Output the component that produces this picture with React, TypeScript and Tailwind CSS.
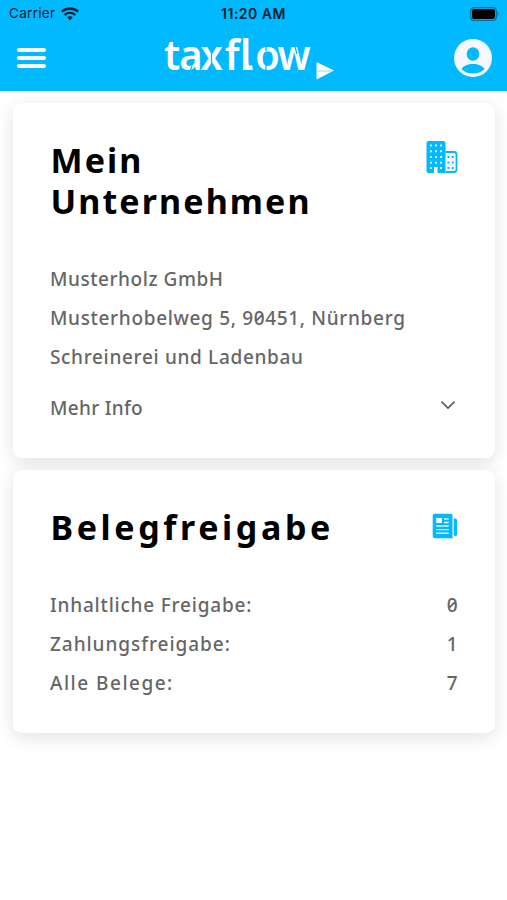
import type { ReactNode } from "react";
import clsx from "clsx";

const companyLines = [
  { text: "Musterholz GmbH", tracking: "tracking-[0.55px]" },
  { text: "Musterhobelweg 5, 90451, Nürnberg", tracking: "tracking-[0.67px]" },
  { text: "Schreinerei und Ladenbau", tracking: "tracking-[0.67px]" },
];

const approvals = [
  { label: "Inhaltliche Freigabe:", count: 0, tracking: "tracking-[0.8px]" },
  { label: "Zahlungsfreigabe:", count: 1, tracking: "tracking-[0.95px]" },
  { label: "Alle Belege:", count: 7, tracking: "tracking-[1.5px]" },
];

function WifiIcon() {
  return (
    <svg width="18" height="14" viewBox="0 0 18 14" fill="none" stroke="#02202e" strokeWidth="2.3">
      <path d="M0.8 4.7C5.4 0.4 12.6 0.4 17.2 4.7" />
      <path d="M3.7 7.9C6.8 5.2 11.2 5.2 14.3 7.9" />
      <path d="M6.2 10.3C7.9 9 10.1 9 11.8 10.3L9 13.3Z" fill="#02202e" stroke="none" />
    </svg>
  );
}

function BatteryIcon() {
  return (
    <svg width="30" height="14" viewBox="0 0 30 14">
      <rect x="0.7" y="0.7" width="25.6" height="12.6" rx="3.4" fill="none" stroke="#026f99" strokeWidth="1.2" />
      <rect x="2" y="2" width="23" height="10" rx="2" fill="#000" />
      <path d="M27.5 4.8c1.4.5 1.4 3.9 0 4.4z" fill="#026f99" />
    </svg>
  );
}

function Logo() {
  return (
    <svg width="172" height="62" viewBox="0 -10 172 62" className="block">
      <text
        x="0 16 38.5 64 80 96 119.5"
        y="35"
        transform="scale(0.95 1)"
        fill="#fff"
        fontSize="42"
        fontWeight="600"
        fontFamily="'Noto Sans', sans-serif"
      >
        taxflow
      </text>
      {/* foot of the l */}
      <path d="M82 27c0 5 1.500 6.500 6.500 5.500" fill="none" stroke="#fff" strokeWidth="4.400" />
      {/* stencil cuts */}
      <path d="M26 36l2-5M47.500 16v12M102 9v7M102 30v7M131 12l2 7" stroke="#00b9ff" strokeWidth="1.3" />
      {/* paper plane */}
      <path d="M152.500 27l17.500 8.600-17.500 9z" fill="#fff" />
      <path d="M153 36h15" stroke="#00b9ff" strokeWidth="0.5" />
    </svg>
  );
}

function AccountIcon() {
  return (
    <svg width="38" height="38" viewBox="0 0 38 38">
      <circle cx="19" cy="19" r="19" fill="#f5f8ff" />
      <ellipse cx="19" cy="15" rx="6.3" ry="6.7" fill="#00b9ff" />
      <path d="M7.5 30C9.6 26.6 14 25 19 25s9.4 1.6 11.5 5C27.6 33 23.6 34.6 19 34.6S10.4 33 7.5 30z" fill="#00b9ff" />
    </svg>
  );
}

function BuildingIcon() {
  const rows = [5.5, 11.2, 17, 22.7];
  return (
    <svg width="32" height="34" viewBox="0 0 32 34">
      <path d="M2 1h15.5a2 2 0 0 1 2 2v30h-8v-6H8v6H2.5A2 2 0 0 1 .5 31V3a2 2 0 0 1 1.5-2z" fill="#00b9ff" />
      <path d="M19.5 12H28a2.5 2.5 0 0 1 2.5 2.5v15A2.5 2.5 0 0 1 28 32h-8.5" fill="none" stroke="#00b9ff" strokeWidth="1.8" />
      {rows.map((y) => (
        <path key={y} d={`M4 ${y}h2M9 ${y}h2M14 ${y}h2`} stroke="#d9f5ff" strokeWidth="2" />
      ))}
      <path d="M4 28h2M14 28h2" stroke="#d9f5ff" strokeWidth="2" />
      <path d="M21.5 17h2M25.7 17h2M21.5 22.5h2M25.7 22.5h2M21.5 28h2M25.7 28h2" stroke="#00b9ff" strokeWidth="1.8" />
    </svg>
  );
}

function NewsIcon() {
  return (
    <svg width="26" height="26" viewBox="0 0 26 26">
      <path d="M2.5.7h16a2 2 0 0 1 2 2v20.5c0 .9.5 1.6 1.3 2H3.2A2.5 2.5 0 0 1 .7 22.7V2.5A1.8 1.8 0 0 1 2.5.7z" fill="#00b9ff" />
      <path d="M21.7 5.5h1.6A1.7 1.7 0 0 1 25 7.2v14.6a1.7 1.7 0 0 1-3.3 0z" fill="#00b9ff" />
      <path d="M4.3 5h5.5v5H4.3z" fill="#fff" />
      <path d="M12 6h4.7M12 9.5h4.7M4.3 13h12.4M4.3 16.6h12.4M4.3 20.3h12.4" stroke="#e3f8ff" strokeWidth="1.4" />
    </svg>
  );
}

function Card({ children }: { children: ReactNode }) {
  return (
    <section className="rounded-[9px] bg-white px-[37px] pt-[37px] pb-[30px] shadow-[0_4px_18px_rgba(0,0,0,0.12)]">
      {children}
    </section>
  );
}

export default function App() {
  return (
    <div className="min-h-screen bg-white font-['Noto_Sans',sans-serif] text-[#666]">
      <header className="h-[91px] bg-[#00b9ff]">
        <div className="grid h-[27px] grid-cols-3 items-center pr-[7px] pl-[9px] font-['Inter',sans-serif] text-[#02202e]">
          <div className="flex items-center gap-1.5">
            <span className="text-[13.5px] tracking-[0.3px]">Carrier</span>
            <WifiIcon />
          </div>
          <span className="-ml-0.5 text-center text-[14px] font-semibold tracking-[0.5px] whitespace-nowrap">11:20 AM</span>
          <div className="flex justify-end">
            <BatteryIcon />
          </div>
        </div>
        <div className="flex h-16 items-start justify-between pr-[15px] pl-[17px]">
          <button className="mt-[21px] flex w-[29px] flex-col gap-1" aria-label="Menü">
            <span className="h-1 w-full rounded-full bg-white" />
            <span className="h-1 w-full rounded-full bg-white" />
            <span className="h-1 w-full rounded-full bg-white" />
          </button>
          <div className="-mt-0.5 mr-px">
            <Logo />
          </div>
          <button className="mt-3" aria-label="Konto">
            <AccountIcon />
          </button>
        </div>
      </header>

      <main className="flex flex-col gap-3 px-[12.5px] pt-3">
        <Card>
          <div className="flex items-start justify-between">
            <h2 className="w-[300px] pl-px text-[34px] leading-[41px] font-bold tracking-[2.1px] text-black">
              Mein Unternehmen
            </h2>
            <BuildingIcon />
          </div>
          <div className="mt-[38px] pl-[0.5px] text-[19px] leading-[39px] font-medium">
            {companyLines.map((line) => (
              <p key={line.text} className={clsx("whitespace-nowrap slashed-zero", line.tracking)}>
                {line.text}
              </p>
            ))}
            <div className="mt-3 flex justify-between">
              <span className="tracking-[0.3px]">Mehr Info</span>
              <svg width="14" height="9" viewBox="0 0 14 9" className="mt-3 mr-[3px]" fill="none" stroke="#666" strokeWidth="1.8">
                <path d="M1 1.2l6 6 6-6" strokeLinecap="round" strokeLinejoin="round" />
              </svg>
            </div>
          </div>
        </Card>

        <Card>
          <div className="flex items-start justify-between">
            <h2 className="pl-px text-[34px] leading-[41px] font-bold tracking-[3.6px] text-black">Belegfreigabe</h2>
            <div className="mt-1.5">
              <NewsIcon />
            </div>
          </div>
          <div className="mt-[38px] pl-[0.5px] text-[19px] leading-[39px] font-medium">
            {approvals.map((row) => (
              <div key={row.label} className="flex justify-between">
                <span className={row.tracking}>{row.label}</span>
                <span className="slashed-zero">{row.count}</span>
              </div>
            ))}
          </div>
        </Card>
      </main>
    </div>
  );
}
